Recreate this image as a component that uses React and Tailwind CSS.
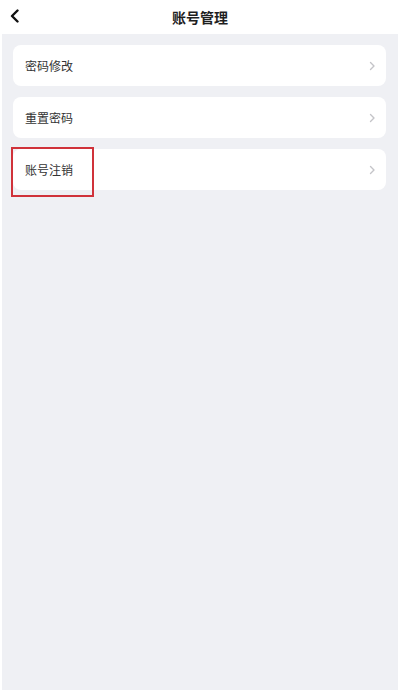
import React from 'react';

const FONT = { fontFamily: '"Noto Sans CJK SC", "Noto Sans", sans-serif' };

function Chevron() {
  return (
    <svg width="7" height="10" viewBox="0 0 7 10" fill="none">
      <path d="M1.5 1.5L5 5L1.5 8.5" stroke="#c4c4c8" strokeWidth="1.4" strokeLinecap="round" strokeLinejoin="round" />
    </svg>
  );
}

function Row({ label, marked }) {
  return (
    <div className="relative">
      <div className="flex h-[41px] items-center justify-between rounded-lg bg-white pl-[12px] pr-[10px]">
        <span className="text-[12px] text-[#333333]">{label}</span>
        <Chevron />
      </div>
      {marked && (
        <div className="pointer-events-none absolute left-[-2px] top-[-2px] h-[50px] w-[83px] border-2 border-[#d0323a]" />
      )}
    </div>
  );
}

export default function App() {
  const items = ['密码修改', '重置密码', '账号注销'];
  return (
    <div className="flex h-[692px] w-[400px] flex-col bg-white" style={FONT}>
      <div className="relative flex h-[34px] shrink-0 items-center justify-center">
        <button className="absolute left-[8px] top-[8px] flex h-[16px] w-[14px] items-center justify-center">
          <svg width="10" height="14" viewBox="0 0 10 14" fill="none">
            <path d="M7.5 1.5L2 7L7.5 12.5" stroke="#111111" strokeWidth="2.4" strokeLinecap="round" strokeLinejoin="round" />
          </svg>
        </button>
        <h1 className="text-[14px] font-bold text-[#1f1f1f]">账号管理</h1>
      </div>
      <div className="mx-[2px] mb-[2px] flex flex-1 flex-col gap-[11px] bg-[#eff0f4] pl-[11px] pr-[12px] pt-[11px]">
        {items.map((t, i) => (
          <Row key={t} label={t} marked={i === 2} />
        ))}
      </div>
    </div>
  );
}
